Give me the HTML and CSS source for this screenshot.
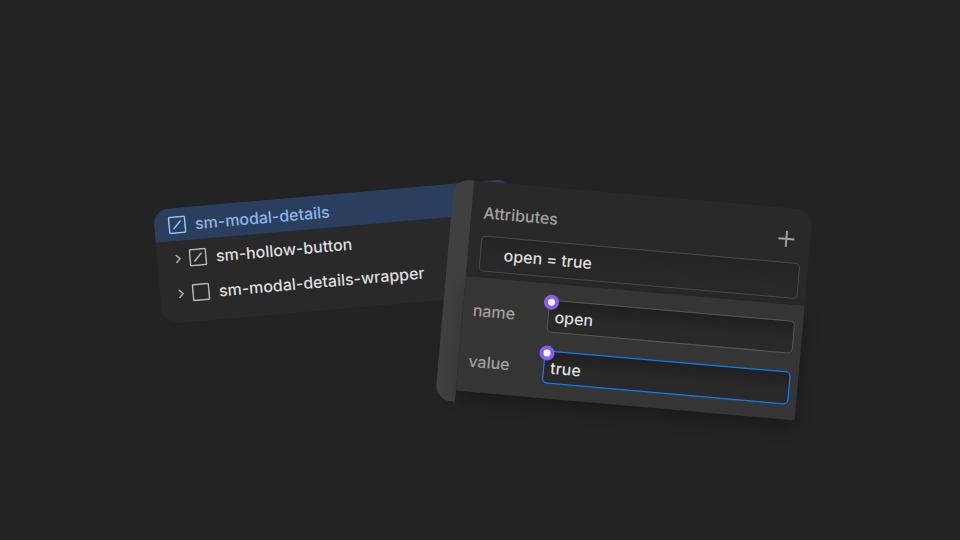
FILE: index.html
```html
<!DOCTYPE html>
<html lang="en">
<head>
    <meta charset="UTF-8">
    <meta name="viewport" content="width=device-width, initial-scale=1.0">
    <title>Attributes</title>
    <link rel="stylesheet" href="styles.css">
</head>
<body>
    <main class="stage">
        <ul class="tree">
            <li class="row selected">
                <svg class="box" viewBox="0 0 18 18"><rect x="1" y="1" width="16" height="16" rx="1"/><path d="M5.2 13L12.8 5"/></svg>
                <span>sm-modal-details</span>
            </li>
            <li class="row child">
                <svg class="chevron" viewBox="0 0 8 10"><path d="M2 1l4 4-4 4"/></svg>
                <svg class="box" viewBox="0 0 18 18"><rect x="1" y="1" width="16" height="16" rx="1"/><path d="M5.2 13L12.8 5"/></svg>
                <span>sm-hollow-button</span>
            </li>
            <li class="row child">
                <svg class="chevron" viewBox="0 0 8 10"><path d="M2 1l4 4-4 4"/></svg>
                <svg class="box" viewBox="0 0 18 18"><rect x="1" y="1" width="16" height="16" rx="1"/></svg>
                <span>sm-modal-details-wrapper</span>
            </li>
        </ul>

        <section class="settings">
            <div class="rail"></div>
            <div class="panel">
                <div class="top">
                    <div class="heading">
                        <h2>Attributes</h2>
                        <button class="add" type="button" aria-label="Add attribute">
                            <svg viewBox="0 0 18 18"><path d="M9 1v16M1 9h16"/></svg>
                        </button>
                    </div>
                    <div class="attribute">open = true</div>
                </div>
                <form class="editor">
                    <div class="field">
                        <label for="attrName">name</label>
                        <div class="control">
                            <input id="attrName" type="text" value="open">
                            <span class="dot"></span>
                        </div>
                    </div>
                    <div class="field">
                        <label for="attrValue">value</label>
                        <div class="control">
                            <input id="attrValue" class="active" type="text" value="true">
                            <span class="dot"></span>
                        </div>
                    </div>
                </form>
            </div>
        </section>
    </main>
</body>
</html>
```
FILE: styles.css
```css
*{
    box-sizing: border-box;
}
body{
    margin: 0;
    background-color: #232323;
    color: #dedede;
    font-family: Inter, "Liberation Sans", sans-serif;
    font-size: 16px;
    font-weight: 500;
    line-height: 20px;
}
svg{
    display: block;
    fill: none;
    stroke: currentColor;
}
.stage{
    display: flex;
    justify-content: center;
    align-items: flex-start;
    align-content: center;
    flex-wrap: wrap;
    min-height: 100vh;
    padding-top: 70px;
}

/* element tree */
.tree{
    width: 360px;
    margin: 0;
    padding: 0 0 12px;
    list-style: none;
    background-color: #292929;
    border-radius: 16px;
    overflow: hidden;
    transform: rotate(-5deg);
}
.row{
    display: flex;
    align-items: center;
    height: 35px;
    padding-left: 14px;
}
.row span{
    margin-left: 9px;
}
.selected{
    height: 33px;
    background-color: #2a3f5e;
    color: #8fb4e6;
}
.child{
    padding-left: 17px;
}
.box{
    width: 18px;
    height: 18px;
    stroke-width: 1.5;
}
.selected .box{
    color: #93c4ff;
}
.child .box{
    margin-left: 7px;
    color: #b8b8b8;
}
.chevron{
    width: 8px;
    height: 10px;
    color: #a8a8a8;
    stroke-width: 1.5;
}

/* attribute settings */
.settings{
    display: flex;
    width: 360px;
    margin-left: -73px;
    transform: rotate(5deg);
}
.rail{
    width: 20px;
    background-color: #404040;
    border-radius: 16px 0 0 16px;
}
.panel{
    flex: 1;
    margin-bottom: 11px;
}
.top{
    height: 96px;
    padding: 20px 8px 0 12px;
    background-color: #292929;
    border-radius: 0 16px 0 0;
}
.heading{
    display: flex;
    justify-content: space-between;
    align-items: center;
    height: 22px;
    margin-bottom: 12px;
    padding-right: 7px;
}
h2{
    margin: 0;
    color: #a0a0a0;
    font-size: 16px;
    font-weight: 500;
}
.add{
    padding: 0;
    border: 0;
    background: none;
    color: #a0a0a0;
}
.add svg{
    width: 18px;
    height: 18px;
    stroke-width: 2;
}
.attribute{
    height: 36px;
    padding: 7px 23px;
    border: 1px solid #4a4a4a;
    border-radius: 5px;
    background-image: linear-gradient(#242424, #292929);
}
.editor{
    display: grid;
    gap: 18px;
    padding: 16px 8px 15px 10px;
    background-color: #353535;
    border-radius: 2px;
    box-shadow: 0 8px 16px rgba(0, 0, 0, 0.25);
}
.field{
    display: flex;
    align-items: center;
}
label{
    width: 75px;
    color: #a0a0a0;
}
.control{
    position: relative;
    flex: 1;
}
input{
    display: block;
    width: 100%;
    height: 33px;
    padding: 0 6px;
    border: 1px solid #555;
    border-radius: 5px;
    outline: none;
    background: linear-gradient(#202020, #292929 60%);
    color: #dedede;
    font: inherit;
}
.active{
    border-color: #0a84ff;
    box-shadow: 0 0 1px #0a84ff;
}
.dot{
    position: absolute;
    top: -5px;
    left: -5px;
    width: 15px;
    height: 15px;
    border: 4px solid #8a5cf5;
    border-radius: 50%;
    background-color: #fff;
}
```
